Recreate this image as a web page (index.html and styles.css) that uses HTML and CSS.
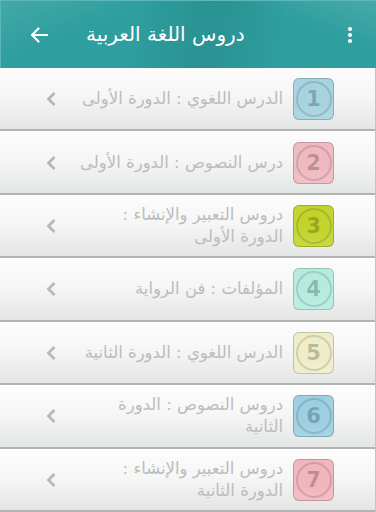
FILE: index.html
```html
<!DOCTYPE html>
<html lang="ar">
<head>
<meta charset="utf-8">
<link rel="stylesheet" href="styles.css">
</head>
<body>
<div class="app">
  <header class="bar">
    <svg class="back" width="18" height="16" viewBox="0 0 18 16"><path d="M17 8H2M8.5 1.5L2 8l6.5 6.5" fill="none" stroke="#fff" stroke-width="2.2" stroke-linecap="round" stroke-linejoin="round"/></svg>
    <h1 class="title">دروس اللغة العربية</h1>
    <svg class="dots" width="6" height="18" viewBox="0 0 6 18"><circle cx="3" cy="3" r="2.1" fill="#fff"/><circle cx="3" cy="9" r="2.1" fill="#fff"/><circle cx="3" cy="15" r="2.1" fill="#fff"/></svg>
  </header>
  <ul class="list">
    <li class="row"><span class="badge c1"><span class="ring">1</span></span><span class="label">الدرس اللغوي : الدورة الأولى</span><svg class="chev" width="12" height="16" viewBox="0 0 12 16"><path d="M9.5 2L3.5 8l6 6" fill="none" stroke="#b8b8b8" stroke-width="2.8"/></svg></li>
    <li class="row"><span class="badge c2"><span class="ring">2</span></span><span class="label">درس النصوص : الدورة الأولى</span><svg class="chev" width="12" height="16" viewBox="0 0 12 16"><path d="M9.5 2L3.5 8l6 6" fill="none" stroke="#b8b8b8" stroke-width="2.8"/></svg></li>
    <li class="row"><span class="badge c3"><span class="ring">3</span></span><span class="label">دروس التعبير والإنشاء :<br>الدورة الأولى</span><svg class="chev" width="12" height="16" viewBox="0 0 12 16"><path d="M9.5 2L3.5 8l6 6" fill="none" stroke="#b8b8b8" stroke-width="2.8"/></svg></li>
    <li class="row"><span class="badge c4"><span class="ring">4</span></span><span class="label">المؤلفات : فن الرواية</span><svg class="chev" width="12" height="16" viewBox="0 0 12 16"><path d="M9.5 2L3.5 8l6 6" fill="none" stroke="#b8b8b8" stroke-width="2.8"/></svg></li>
    <li class="row"><span class="badge c5"><span class="ring">5</span></span><span class="label">الدرس اللغوي : الدورة الثانية</span><svg class="chev" width="12" height="16" viewBox="0 0 12 16"><path d="M9.5 2L3.5 8l6 6" fill="none" stroke="#b8b8b8" stroke-width="2.8"/></svg></li>
    <li class="row"><span class="badge c6"><span class="ring">6</span></span><span class="label">دروس النصوص : الدورة<br>الثانية</span><svg class="chev" width="12" height="16" viewBox="0 0 12 16"><path d="M9.5 2L3.5 8l6 6" fill="none" stroke="#b8b8b8" stroke-width="2.8"/></svg></li>
    <li class="row"><span class="badge c7"><span class="ring">7</span></span><span class="label">دروس التعبير والإنشاء :<br>الدورة الثانية</span><svg class="chev" width="12" height="16" viewBox="0 0 12 16"><path d="M9.5 2L3.5 8l6 6" fill="none" stroke="#b8b8b8" stroke-width="2.8"/></svg></li>
  </ul>
</div>
</body>
</html>
```
FILE: styles.css
```css
html, body {
  margin: 0;
  padding: 0;
}
body {
  width: 376px;
  height: 512px;
  overflow: hidden;
  font-family: "DejaVu Sans", "Noto Sans", sans-serif;
  background: #f0f0f0;
}
.app {
  display: flex;
  flex-direction: column;
  height: 512px;
}
.bar {
  height: 68px;
  flex: none;
  display: flex;
  align-items: center;
  padding: 0 23px 0 29px;
  box-sizing: border-box;
  background:
    linear-gradient(160deg, rgba(255,255,255,0.10) 0%, rgba(255,255,255,0) 30%),
    linear-gradient(200deg, rgba(255,255,255,0.12) 0%, rgba(255,255,255,0) 25%),
    linear-gradient(100deg, rgba(0,0,0,0) 35%, rgba(0,40,40,0.10) 55%, rgba(0,0,0,0) 75%),
    #2e9e9e;
  border-top: 1px solid #5cb8b8;
  border-left: 1px solid #5cb8b8;
}
.back {
  flex: none;
}
.title {
  margin: 0 0 0 38px;
  font-size: 20px;
  font-weight: normal;
  color: #fff;
  direction: rtl;
  line-height: 1;
  padding-bottom: 2px;
}
.dots {
  flex: none;
  margin-left: auto;
}
.list {
  list-style: none;
  margin: 0;
  padding: 0;
  flex: 1;
  display: flex;
  flex-direction: column;
  border-right: 1px solid #c4c4c4;
}
.row {
  flex: 1;
  display: flex;
  direction: rtl;
  align-items: center;
  padding-right: 41px;
  background: linear-gradient(#fcfcfc, #f6f6f6 45%, #e4e5e5);
  border-bottom: 2px solid #b3b3b3;
  border-top: 1px solid #ffffff;
}
.badge {
  flex: none;
  width: 41px;
  height: 42px;
  border-radius: 6px;
  box-sizing: border-box;
  border: 1px solid rgba(0,0,0,0.18);
  display: flex;
  align-items: center;
  justify-content: center;
  box-shadow: inset 0 -8px 10px rgba(255,255,255,0.12);
}
.ring {
  width: 36px;
  height: 36px;
  box-sizing: border-box;
  border-radius: 50%;
  border: 2px solid rgba(0,0,0,0.13);
  display: flex;
  align-items: center;
  justify-content: center;
  font-family: "DejaVu Sans", sans-serif;
  font-weight: bold;
  font-size: 21px;
  color: rgba(0,0,0,0.22);
  direction: ltr;
}
.c1 { background: #a6d3e0; }
.c2 { background: #f0b9c1; }
.c3 { background: #c2d42c; }
.c4 { background: #b6ece0; }
.c5 { background: #efedc8; }
.c6 { background: #9ccfe1; }
.c7 { background: #f1b6bd; }
.label {
  margin-right: 10px;
  width: 228px;
  font-size: 16.5px;
  line-height: 22px;
  color: #bcbcbc;
  white-space: nowrap;
}
.chev {
  flex: none;
  margin-right: auto;
  margin-left: 45px;
}
```
